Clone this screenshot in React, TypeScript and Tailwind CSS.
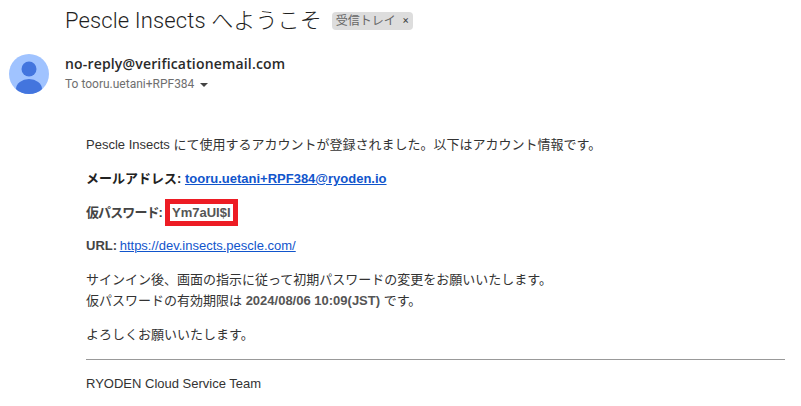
function Avatar() {
  return (
    <svg width="40" height="40" viewBox="0 0 40 40" className="shrink-0">
      <defs>
        <clipPath id="avatar-clip">
          <circle cx="20" cy="20" r="20" />
        </clipPath>
      </defs>
      <circle cx="20" cy="20" r="20" fill="#a0c3ff" />
      <g clipPath="url(#avatar-clip)" fill="#4375de">
        <circle cx="20" cy="15" r="7.5" />
        <ellipse cx="20" cy="35" rx="13" ry="10" />
      </g>
    </svg>
  );
}

export default function App() {
  return (
    <div className="w-[801px] h-[406px] overflow-hidden bg-white font-['Roboto','Noto_Sans_CJK_JP',sans-serif] text-[#222]">
      <div className="flex items-center h-[26px] mt-[8px] pl-[65px]">
        <h1 className="text-[22px] leading-[26px] font-light tracking-[0.12px] text-[#1f1f1f]">
          Pescle Insects へようこそ
        </h1>
        <span className="ml-[10px] flex items-center h-[18px] px-[4px] rounded-[4px] bg-[#dddddd] text-[12px] text-[#666]">
          受信トレイ
          <span className="ml-[7px] text-[11px] text-[#444]">×</span>
        </span>
      </div>

      <div className="flex mt-[20px] pl-[9px]">
        <Avatar />
        <div className="ml-[16px]">
          <div className="font-['Open_Sans',sans-serif] text-[14px] leading-[20px] font-semibold tracking-[0.17px] text-[#2a2a2a]">
            no-reply@verificationemail.com
          </div>
          <div className="flex items-center text-[12px] leading-[20px] text-[#6f6f6f]">
            To tooru.uetani+RPF384
            <span className="ml-[6px] mt-[1px] w-0 h-0 border-x-[4px] border-x-transparent border-t-[4px] border-t-[#444]" />
          </div>
        </div>
      </div>

      <div className="mt-[40px] ml-[86px] mr-[16px] font-['Liberation_Sans','Noto_Sans_CJK_JP',sans-serif] text-[13px] leading-[21px] text-[#333]">
        <p>Pescle Insects にて使用するアカウントが登録されました。以下はアカウント情報です。</p>
        <p className="mt-[13px]">
          <b className="text-[#222]">メールアドレス: </b>
          <a className="font-bold text-[#1155cc] underline">tooru.uetani+RPF384@ryoden.io</a>
        </p>
        <p className="mt-[13px] flex items-center h-[21px]">
          <b className="tracking-[-0.9px] text-[#444]">仮パスワード:</b>
          <b className="ml-[3px] border-[5px] border-[#ed1c24] px-[2px] leading-[17px] text-[#555]">Ym7aUI$I</b>
        </p>
        <p className="mt-[12px]">
          <b className="text-[#444]">URL: </b>
          <a className="-ml-[1px] text-[#1155cc] underline">https://dev.insects.pescle.com/</a>
        </p>
        <p className="mt-[13px]">サインイン後、画面の指示に従って初期パスワードの変更をお願いいたします。</p>
        <p>
          仮パスワードの有効期限は <b className="text-[#555]">2024/08/06 10:09(JST)</b> です。
        </p>
        <p className="mt-[13px]">よろしくお願いいたします。</p>
        <hr className="mt-[14px] border-t border-[#999]" />
        <p className="mt-[13px]">RYODEN Cloud Service Team</p>
      </div>
    </div>
  );
}
